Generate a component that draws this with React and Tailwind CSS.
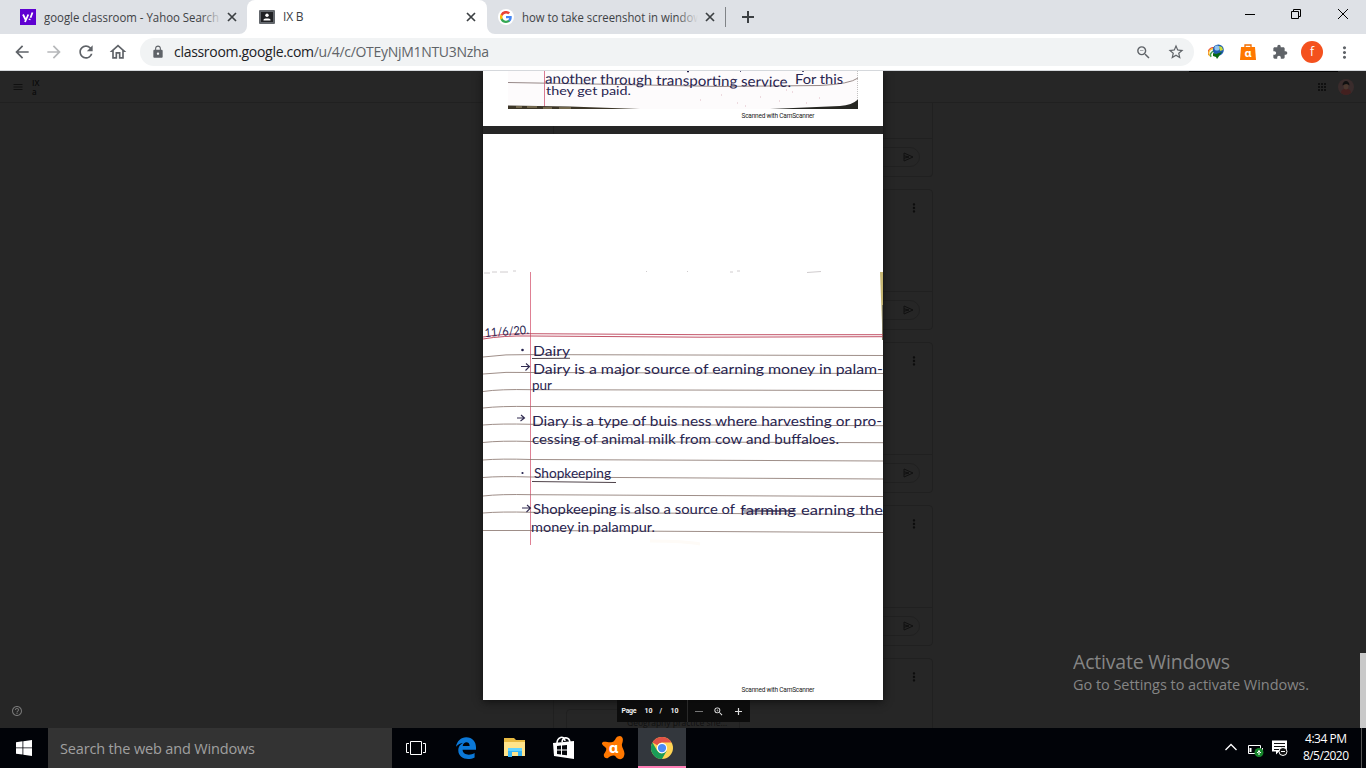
import React from 'react';
import {
  MdArrowBack, MdArrowForward, MdRefresh, MdOutlineHome, MdLock, MdZoomOut, MdStarBorder,
  MdExtension, MdMoreVert, MdMenu, MdApps, MdHelpOutline, MdZoomIn,
} from 'react-icons/md';

const Cross = ({ className }) => (
  <svg className={className} viewBox="0 0 10 10" stroke="currentColor" fill="none">
    <path d="M1 1l8 8M9 1l-8 8" strokeWidth="1.7" />
  </svg>
);

const GoogleG = () => (
  <svg className="size-3" viewBox="0 0 48 48">
    <path fill="#4285f4" d="M47 24.5c0-1.600-.2-3.100-.4-4.500H24v9h13a11 11 0 0 1-4.800 7.300v6h7.700C44.400 38.200 47 32 47 24.500z" />
    <path fill="#34a853" d="M24 48c6.500 0 12-2.100 15.900-5.800l-7.700-6A14.500 14.500 0 0 1 10.500 28.600h-8v6.200A24 24 0 0 0 24 48z" />
    <path fill="#fbbc05" d="M10.500 28.600a14.400 14.400 0 0 1 0-9.200v-6.200h-8a24 24 0 0 0 0 21.600z" />
    <path fill="#ea4335" d="M24 9.500c3.500 0 6.700 1.200 9.200 3.600l6.900-6.900A24 24 0 0 0 2.500 13.200l8 6.200A14.300 14.300 0 0 1 24 9.500z" />
  </svg>
);

function TabStrip() {
  return (
    <div className="flex h-[34px] bg-[#dee1e6] text-[12px] text-[#3c4043]">
      <div className="flex w-[247px] items-center pl-5">
        <span className="flex size-4 items-center justify-center bg-[#5f01d1]">
          <svg className="size-4" viewBox="0 0 16 16" fill="none" stroke="#fff" strokeWidth="1.800">
            <path d="M3 5.500l2.500 5M8.300 5.500L5 13M12.500 3.500l-2 5.200M9.800 9.800l-.4 1.300" />
          </svg>
        </span>
        <svg className="ml-2 h-6 w-[178px]" viewBox="0 0 178 24">
          <defs>
            <linearGradient id="fadeA" gradientUnits="userSpaceOnUse" x1="0" x2="178" y1="0" y2="0">
              <stop offset="0.880" stopColor="#3c4043" /><stop offset="1" stopColor="#3c4043" stopOpacity="0" />
            </linearGradient>
          </defs>
          <text x="0" y="16.500" fill="url(#fadeA)" fontSize="12.500" textLength="175" lengthAdjust="spacingAndGlyphs">google classroom - Yahoo Search</text>
        </svg>
        <Cross className="ml-[5px] size-[10px]" />
      </div>
      <div className="relative flex w-[240px] items-center rounded-t-lg bg-white pl-3">
        <svg className="absolute bottom-0 -left-2 size-2" viewBox="0 0 8 8"><path fill="#fff" d="M8 0v8H0a8 8 0 0 0 8-8z" /></svg>
        <svg className="absolute -right-2 bottom-0 size-2" viewBox="0 0 8 8"><path fill="#fff" d="M0 0v8h8a8 8 0 0 1-8-8z" /></svg>
        <svg className="h-[14px] w-4" viewBox="0 0 16 14">
          <rect width="16" height="14" rx="1" fill="#63676c" /><rect x="2" y="2" width="12" height="10" fill="#202124" />
          <circle cx="8" cy="5.300" r="1.700" fill="#fff" /><path d="M4.500 10.500V9.700c0-1.700 7-1.700 7 0v.8z" fill="#fff" />
        </svg>
        <span className="ml-2 w-[183px] tracking-[-0.2px]">IX B</span>
        <Cross className="size-[10px]" />
      </div>
      <div className="flex items-center pl-[11px]">
        <span className="flex size-4 items-center justify-center rounded-full bg-white"><GoogleG /></span>
        <svg className="ml-2 h-6 w-[182px]" viewBox="0 0 182 24">
          <defs>
            <linearGradient id="fadeB" gradientUnits="userSpaceOnUse" x1="0" x2="176" y1="0" y2="0">
              <stop offset="0.880" stopColor="#3c4043" /><stop offset="1" stopColor="#3c4043" stopOpacity="0" />
            </linearGradient>
          </defs>
          <text x="0" y="16.500" fill="url(#fadeB)" fontSize="12.500" textLength="180" lengthAdjust="spacingAndGlyphs">how to take screenshot in window</text>
        </svg>
        <Cross className="ml-[1px] size-[10px]" />
        <span className="ml-[10px] h-5 w-px bg-[#808387]" />
        <svg className="ml-4 size-3" viewBox="0 0 12 12" stroke="#3c4043" strokeWidth="2"><path d="M6 0v12M0 6h12" /></svg>
      </div>
      <div className="ml-auto flex items-center pr-[17px] pb-[6px]">
        <svg className="h-3 w-[104px]" viewBox="0 0 104 12" fill="none" stroke="#000">
          <path d="M0 6.500h10M46.500 3.500h7v7h-7zM48.500 3.500v-2h7v7h-2M93 1l10 10M103 1L93 11" />
        </svg>
      </div>
    </div>
  );
}

function Toolbar() {
  return (
    <div className="flex h-[37px] items-center border-b border-[#d5d8dc] bg-white pl-3 text-[#5f6368]">
      <MdArrowBack className="size-5" />
      <MdArrowForward className="ml-3 size-5 text-[#b6b8ba]" />
      <MdRefresh className="ml-3 size-5" />
      <MdOutlineHome className="ml-3 size-5" />
      <div className="ml-3 flex h-7 w-[1054px] items-center rounded-full bg-[#f1f3f4] pl-[11px]">
        <MdLock className="size-[14px]" />
        <svg className="ml-[9px] h-6 w-[320px]" viewBox="0 0 320 24" fontSize="14">
          <text x="0" y="17" textLength="315" fill="#5f6368"><tspan fill="#202124">classroom.google.com</tspan>/u/4/c/OTEyNjM1NTU3Nzha</text>
        </svg>
        <MdZoomOut className="ml-auto size-[17px]" />
        <MdStarBorder className="mr-[9px] ml-[15px] size-[18px]" />
      </div>
      <svg className="ml-[14px] size-4" viewBox="0 0 16 16">
        <g fill="none" strokeWidth="1.300"><path stroke="#e53935" d="M.8 11A5 5 0 0 1 7 4" /><path stroke="#fbc02d" d="M2 12A4 4 0 0 1 8 6" /><path stroke="#43a047" d="M3 13a4 4 0 0 1 6-5" /></g>
        <circle cx="10.300" cy="6" r="5.500" fill="#1f5daf" /><circle cx="9" cy="4" r="2.600" fill="#92c5f1" />
        <path d="M11 2l3 1 1 3-3 1z" fill="#cddc39" /><path d="M5 9l3 1 3-1 3-1-5 7-1-2-3-1z" fill="#096a13" />
      </svg>
      <svg className="ml-4 size-4" viewBox="0 0 16 16">
        <path d="M5 4V1h6v3" fill="none" stroke="#ef6c00" strokeWidth="1.300" /><path d="M1 3h14l1 13H0z" fill="#ff7800" />
        <text x="8" y="12.500" textAnchor="middle" fontSize="11" fontWeight="700" fill="#fff">ɑ</text>
      </svg>
      <MdExtension className="ml-4 size-4" />
      <span className="ml-[13px] flex size-[22px] items-center justify-center rounded-full bg-[#f4511e] text-[12px] text-white">f</span>
      <MdMoreVert className="ml-3 size-[19px]" />
    </div>
  );
}

const Send = () => (
  <svg className="h-[10px] w-[11px]" viewBox="0 0 11 10" fill="none" stroke="#101010">
    <path d="M1 1l9 4-9 4V1zM1 3.800L6 5 1 6.200" />
  </svg>
);

function Post({ className, children, menu = true }) {
  return (
    <div className={`flex w-[380px] shrink-0 flex-col rounded border border-[#202020] ${className}`}>
      <div className="flex flex-1 justify-end pt-[11px] pr-[11px]">{menu && <MdMoreVert className="size-[14px] text-[#0c0c0c]" />}</div>
      {children || (
        <div className="flex h-[38px] items-center justify-end border-t border-[#202020] pr-3 pb-px">
          <div className="flex h-5 w-80 items-center justify-end rounded-full border border-[#202020] pr-[5px]">
            <Send />
          </div>
        </div>
      )}
    </div>
  );
}

function Stream() {
  return (
    <div className="flex h-full flex-col overflow-hidden bg-[#262626]">
      <div className="flex h-8 shrink-0 items-center border-b border-[#202020] pl-3 text-[#101010]">
        <MdMenu className="size-3" />
        <div className="ml-2 text-[8px] leading-[9px] font-semibold text-[#0a0a0a]">IX<br />a</div>
        <MdApps className="ml-auto size-3" />
        <svg className="mr-3 ml-[10px] size-4" viewBox="0 0 16 16">
          <circle cx="8" cy="8" r="8" fill="#3a2c2c" /><path d="M3 14c0-6 10-6 10 0q-5 4-10 0z" fill="#43201f" /><ellipse cx="8" cy="7" rx="2.500" ry="3.500" fill="#4b382f" /><path d="M4.500 6.500c0-6 7-6 7 0q-3-3-7 0z" fill="#101010" />
        </svg>
      </div>
      <div className="flex min-h-0 flex-1 flex-col pl-[553px]">
        <Post className="h-[74px] rounded-t-none border-t-0" menu={false} />
        <Post className="mt-3 h-[141px]" />
        <Post className="mt-3 h-[151px]" />
        <Post className="mt-3 h-[141px]" />
        <Post className="mt-3 h-[120px]">
          <div className="mb-9 ml-3 h-8 w-[174px] rounded border border-[#202020] pt-[7px] pl-[60px] text-[8.500px] leading-3 whitespace-nowrap text-[#101010]">Geography practice she...</div>
        </Post>
      </div>
    </div>
  );
}

const Ink = ({ x, y, w, size = 14, children }) => (
  <text x={x} y={y} textLength={w} lengthAdjust="spacingAndGlyphs" fontSize={size} fill="#28244f">{children}</text>
);

const rules = [
  'M483 357Q505 354 531 354.600L883 355.500', 'M483 374Q505 371.500 531 372.500L883 373.500',
  'M483 391.500Q500 389 531 389.700L883 390.500', 'M483 408Q500 406 531 406.500L883 407.500',
  'M483 425Q500 423.500 531 424.300L883 425.700', 'M483 442.500Q500 440.500 531 441.500L883 442.700',
  'M483 460Q500 458.500 531 459.500L883 461', 'M483 477.500Q500 476 531 477L883 479',
  'M483 496Q500 494 531 494.700L883 496.500', 'M483 513Q500 511.500 531 512.300L883 514.500',
  'M483 530.500L531 530.500L883 532.500',
];

function FirstPage() {
  return (
    <svg className="h-[55px] w-[400px] shrink-0 bg-white" viewBox="483 71 400 55" fontFamily="Lato, sans-serif">
      <rect x="508" y="71" width="350" height="38" fill="#fdfbfc" />
      <path d="M508 82.500L620 84.500L720 86.500L820 85.500Q850 84 858 78" fill="none" stroke="#7c6b6a" strokeWidth=".8" />
      <path d="M544.500 71v36" stroke="#cf5a78" strokeWidth=".8" />
      <path d="M857.500 71v30" stroke="#888" strokeWidth=".5" strokeDasharray="1 1" />
      <path d="M508 105.500L570 106.500L640 109H508z" fill="#3c3527" />
      <path d="M516 107h6m5 0h10m6 1h9m7 0h12" stroke="#a79974" />
      <path d="M770 109L840 106Q852 105 858 99.500V109z" fill="#262622" />
      <path d="M687 71.500h2M740 71h1M802 71h2" stroke="#25224f" strokeWidth="1.500" />
      <path d="M700 100h1m20-5h1m15 8h1m22-6h1m18 4h1m12-9h1m13 11h1m12-5h1m-75 8h1m40-16h1" stroke="#dfb8c2" />
      <g transform="rotate(.8 545 84)">
        <Ink x={545} y={83.500} w={246}>another through transporting service.</Ink>
      </g>
      <Ink x={795} y={84} w={48}>For this</Ink>
      <Ink x={546} y={94.500} w={85} size={11.500}>they get paid.</Ink>
      <text x="741.500" y="118" fontFamily="Roboto, sans-serif" fontSize="6.500" textLength="73" fill="#222">Scanned with CamScanner</text>
    </svg>
  );
}

function SecondPage() {
  return (
    <svg className="h-[566px] w-[400px] shrink-0 bg-white" viewBox="483 134 400 566" fontFamily="Lato, sans-serif">
      <path d="M484 273h6m2-1h5m3 0h8m5-1h3M646 271.500h1M687 271.500h1M730 272h3m4-1h3M807 272.500l14-1" stroke="#d0ccce" fill="none" />
      <path d="M880 272h3v52h-1z" fill="#c6b673" /><path d="M882 305h1v35h-1z" fill="#7a765f" />
      <path d="M530.500 272v273" stroke="#df8094" strokeWidth="1" />
      <g fill="none" stroke="#bb4057" strokeWidth=".9">
        <path d="M483 337Q503 333.500 530 333.700L700 334.700L883 334.700" /><path d="M483 339Q503 335.500 530 336L700 337.200L883 336.700" />
      </g>
      <g fill="none" stroke="#857169" strokeWidth=".8">{rules.map((d) => <path key={d} d={d} />)}</g>
      <g fill="none" stroke="#302b50" strokeWidth="1.100">
        <path d="M532 358.500L570 358.300M532 481.500L616 482.500" stroke="#50444b" />
        <path d="M521 366.500h8m-3-3l3.500 3-4 4M517 418h7m-3-3l3.500 3-4 3M522 508h8m-3-3l3.500 3-4 4" />
        <path d="M743 510l53 1M744 512l51-1" stroke="#383149" strokeWidth=".8" />
      </g>
      <circle cx="522.500" cy="350" r="1.300" fill="#25224f" /><circle cx="522.500" cy="473" r="1.100" fill="#25224f" />
      <g transform="rotate(-4 485 336)"><Ink x={485} y={337} w={44} size={12}>11/6/20.</Ink></g>
      <Ink x={533} y={356} w={37}>Dairy</Ink>
      <Ink x={533} y={374} w={350}>Dairy is a major source of earning money in palam-</Ink>
      <Ink x={532} y={390} w={20}>pur</Ink>
      <Ink x={532} y={426} w={350}>Diary is a type of buis ness where harvesting or pro-</Ink>
      <Ink x={532} y={443.500} w={307}>cessing of animal milk from cow and buffaloes.</Ink>
      <Ink x={534} y={478} w={77}>Shopkeeping</Ink>
      <Ink x={533} y={514} w={202}>Shopkeeping is also a source of</Ink>
      <Ink x={740} y={514.500} w={56}>farming</Ink>
      <Ink x={801} y={514.500} w={82}>earning the</Ink>
      <Ink x={531} y={531.500} w={124}>money in palampur.</Ink>
      <path d="M650 541q35 0 50 3" stroke="#fefbf7" strokeWidth="3" fill="none" />
      <text x="741.500" y="692" fontFamily="Roboto, sans-serif" fontSize="6.500" textLength="73" fill="#222">Scanned with CamScanner</text>
    </svg>
  );
}

function Viewer() {
  return (
    <div className="absolute inset-0 flex flex-col items-center overflow-hidden">
      <div className="flex flex-col gap-2 shadow-[0_2px_8px_#111]">
        <FirstPage />
        <SecondPage />
      </div>
      <div className="flex h-[22px] w-[133px] shrink-0 items-center bg-[#0a0a0a]/90 font-['Roboto'] text-[7px] font-bold text-[#eee]">
        <span className="ml-[5px] w-[23px] tracking-[-0.3px]">Page</span><span className="w-[15px]">10</span><span className="w-[11px]">/</span><span className="w-4">10</span>
        <span className="h-full w-px bg-[#292929]" />
        <span className="ml-[7px] h-px w-2 bg-[#777]" />
        <MdZoomIn className="ml-[10px] size-[11px]" />
        <svg className="ml-[11px] size-[7px]" viewBox="0 0 7 7" stroke="#ddd" strokeWidth="1.200"><path d="M3.500 0v7M0 3.500h7" /></svg>
      </div>
      <MdHelpOutline className="absolute bottom-[11px] left-[11px] size-3 text-[#777]" />
      <div className="absolute top-0 left-[1189px] h-px w-[149px] bg-black" />
      <div className="absolute right-0 bottom-0 h-[75px] w-[6px] bg-[#c9c9c9]" />
      <svg className="absolute top-[575px] left-[1073px] h-[55px] w-[240px]" viewBox="0 0 240 55" fill="#858585">
        <text x="0" y="23" fontSize="19.500" textLength="157">Activate Windows</text>
        <text x="0" y="44" fontSize="14.500" textLength="236">Go to Settings to activate Windows.</text>
      </svg>
    </div>
  );
}

function Taskbar() {
  return (
    <div className="flex h-10 bg-[#010308]">
      <div className="flex w-12 items-center justify-center">
        <svg className="size-4" viewBox="0 0 16 16" fill="#fff"><path d="M0 2.200l6.500-.9v6.200H0zM7.300 1.200L16 0v7.500H7.300zM0 8.300h6.500v6.300L0 13.800zM7.300 8.300H16V16l-8.700-1.200z" /></svg>
      </div>
      <div className="flex w-[344px] items-center bg-[#333] pl-3">
        <svg className="h-7 w-[200px]" viewBox="0 0 200 28"><text x="0" y="19.500" fontSize="14.500" textLength="195" fill="#a0a0a0">Search the web and Windows</text></svg>
      </div>
      <div className="flex w-12 items-center justify-center">
        <svg className="h-[14px] w-5" viewBox="0 0 20 14" fill="none" stroke="#fff"><path d="M4.500.5h11v13h-11zM3 2.500H.5v9H3M17 2.500h2.500v9H17" /></svg>
      </div>
      <div className="flex w-[52px] items-center justify-center">
        <svg className="h-[22px] w-5" viewBox="0 0 20 22" fill="#0b78d7"><path d="M0 9.800C.8 4 5 .2 10.200.2 16.400.2 20 4.600 20 10.300v2.500H6.600c.2 5.400 7.500 6 12 3.200v4.400C11.500 24 2.300 21.200 2.300 13.500c0-4.100 2.300-6.500 5.100-7.800C4.500 6 2 7.300 0 9.800zm6.700-.9h6.900c.2-4.700-6.200-4.800-6.900 0z" fillRule="evenodd" /></svg>
      </div>
      <div className="flex w-[46px] items-center justify-center">
        <svg className="h-5 w-[22px]" viewBox="0 0 22 20"><path fill="#e8ba42" d="M0 0h10l2 2h9v4H0z" /><path fill="#ffe48a" d="M0 4h21v14H0z" /><path fill="#36b5f5" d="M4 10h14v8h-4v-4H8v5H4z" /><path fill="#62d4ff" d="M4 10h14v3H4z" /><path fill="#e4bb4b" d="M1 1h2v1H1z" /></svg>
      </div>
      <div className="flex w-[52px] items-center justify-center">
        <svg className="h-6 w-[22px]" viewBox="0 0 22 24"><path fill="#fff" d="M0 7l21-2v18L1 20z" /><path d="M4 7C4 2 11-2 12 5M9 6c1-6 7-5 8 0" fill="none" stroke="#fff" strokeWidth="1.600" /><path fill="#05070b" d="M4 10l4-.4v4H4zM9 9.500l5-.5v4.600H9zM4 14.600h4v4l-4-.5zM9 14.600h5v4.700l-5-.6z" /></svg>
      </div>
      <div className="flex w-12 items-center justify-center pr-[2px]">
        <svg className="size-6" viewBox="0 0 24 24"><path fill="#ff7800" d="M2 6c3-1 8 2 11-1 2-2 2-5 6-5 4 1 3 5 2 8-1 4 4 7 2 12-1 4-6 4-8 1s-6-1-8 1c-2 1-5-1-4-4 1-2 3-4 2-6-2-2-6-4-3-6z" /><text x="12.500" y="17" fontSize="15" fontWeight="700" textAnchor="middle" fill="#fff">ɑ</text></svg>
      </div>
      <div className="flex w-12 items-center justify-center border-b-2 border-[#ff7eb6] bg-[#33373d] pt-[1px]">
        <svg className="size-[22px]" viewBox="0 0 24 24"><circle cx="12" cy="12" r="12" fill="#ffd454" /><path fill="#e15246" d="M1.600 6A12 12 0 0 1 22.400 6H12a6 6 0 0 0-5.200 3z" /><path fill="#199c58" d="M1.600 6a12 12 0 0 0 10.400 18l5.200-9-5.200 3a6 6 0 0 1-5.200-3z" /><circle cx="12" cy="12" r="5.600" fill="#fff" /><circle cx="12" cy="12" r="4.500" fill="#4c8bf5" /></svg>
      </div>
      <div className="ml-auto flex items-center">
        <svg className="h-5 w-[63px]" viewBox="0 0 63 20" fill="none" stroke="#fff">
          <path d="M.5 12l5.500-5.500 5.500 5.500" strokeWidth="1.300" />
          <path d="M23.500 7.500v8h12v-8z" /><path d="M37.500 10v3" /><path d="M25.500 10v4" strokeWidth="2" />
          <circle cx="34" cy="14.500" r="4.500" fill="#16852b" stroke="none" /><path d="M34 12v5m-2-2l2-2 2 2" />
          <path d="M47 2.500h15v11H54l-3 3v-3h-4z" fill="#fff" stroke="none" /><path d="M49 5.500h11M49 8.500h11M49 11.500h5" stroke="#111" />
          <circle cx="58" cy="13.500" r="4" fill="#111" /><path d="M56 13.500h4" />
        </svg>
        <svg className="ml-[13px] h-10 w-[60px]" viewBox="0 0 60 40" fill="#fff" fontSize="12">
          <text x="4" y="15" textLength="42">4:34 PM</text><text x="2" y="32" textLength="46">8/5/2020</text>
        </svg>
        <span className="mr-1 h-full w-px bg-[#555]" />
      </div>
    </div>
  );
}

export default function App() {
  return (
    <div className="flex h-[768px] w-[1366px] flex-col overflow-hidden font-['Open_Sans','Noto_Sans',sans-serif]">
      <TabStrip />
      <Toolbar />
      <main className="relative h-[657px]">
        <Stream />
        <Viewer />
      </main>
      <Taskbar />
    </div>
  );
}
